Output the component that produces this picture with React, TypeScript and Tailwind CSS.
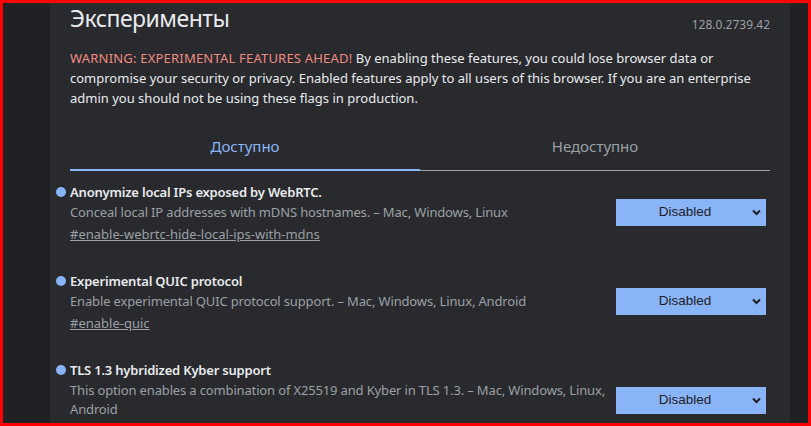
import React from 'react';

type Flag = {
  name: string;
  desc: string;
  link: string;
};

const flags: Flag[] = [
  {
    name: 'Anonymize local IPs exposed by WebRTC.',
    desc: 'Conceal local IP addresses with mDNS hostnames. – Mac, Windows, Linux',
    link: '#enable-webrtc-hide-local-ips-with-mdns',
  },
  {
    name: 'Experimental QUIC protocol',
    desc: 'Enable experimental QUIC protocol support. – Mac, Windows, Linux, Android',
    link: '#enable-quic',
  },
  {
    name: 'TLS 1.3 hybridized Kyber support',
    desc: 'This option enables a combination of X25519 and Kyber in TLS 1.3. – Mac, Windows, Linux, Android',
    link: '#enable-tls13-kyber',
  },
];

function FlagSelect() {
  return (
    <div className="relative mr-[4px] flex h-[27px] w-[150px] shrink-0 items-center justify-center bg-[#8ab4f8] text-[13.5px] text-[#202124] [font-family:'Liberation_Sans',Arial,sans-serif]">
      <span className="-ml-[12px]">Disabled</span>
      <svg
        className="absolute right-[5px] top-[10px]"
        width="9"
        height="7"
        viewBox="0 0 9 7"
        fill="none"
      >
        <path d="M1 1.5 4.5 5 8 1.5" stroke="#202124" strokeWidth="2" />
      </svg>
    </div>
  );
}

function FlagRow({ flag }: { flag: Flag }) {
  return (
    <div className="flex items-center justify-between pb-[26px]">
      <div className="relative min-w-0 flex-1">
        <span className="absolute -left-[14px] top-[6px] h-[10px] w-[10px] rounded-full bg-[#8ab4f8]" />
        <div className="text-[13px] font-semibold leading-[22px] tracking-[-0.2px] text-[#e8eaed]">
          {flag.name}
        </div>
        <div className="text-[13px] leading-[19px] tracking-[-0.15px] text-[#9aa0a6]">{flag.desc}</div>
        <div className="mt-[3px] text-[13px] leading-[19px] text-[#9aa0a6] underline">{flag.link}</div>
      </div>
      <FlagSelect />
    </div>
  );
}

export default function App() {
  return (
    <div className="flex h-[426px] w-[811px] overflow-hidden border-[3px] border-[#ff0000] bg-[#202124] [font-family:'Noto_Sans',sans-serif]">
      <div className="ml-[47px] h-full w-[740px] shrink-0 overflow-hidden bg-[#292a2d] px-5">
        <div className="flex h-[31px] items-start justify-between">
          <h1 className="text-[23px] leading-[30px] tracking-[-0.5px] text-[#e8eaed]">Эксперименты</h1>
          <span className="mt-[13px] text-[12px] leading-[18px] text-[#9aa0a6]">128.0.2739.42</span>
        </div>
        <p className="mt-[14px] text-[13px] leading-[20px] text-[#e8eaed]">
          <span className="tracking-[0.2px] text-[#f28b82]">WARNING: EXPERIMENTAL FEATURES AHEAD!</span> By
          enabling these features, you could lose browser data or compromise your security or privacy.
          Enabled features apply to all users of this browser. If you are an enterprise admin you should not
          be using these flags in production.
        </p>
        <div className="mt-[15px] flex">
          <div className="flex h-[48px] flex-1 items-center justify-center border-b-2 border-[#8ab4f8] text-[15px] text-[#8ab4f8]">
            Доступно
          </div>
          <div className="flex h-[48px] flex-1 items-center justify-center border-b border-[#9aa0a6] text-[15px] text-[#9aa0a6]">
            Недоступно
          </div>
        </div>
        <div className="mt-[10px]">
          {flags.map((f) => (
            <FlagRow key={f.link} flag={f} />
          ))}
        </div>
      </div>
    </div>
  );
}
